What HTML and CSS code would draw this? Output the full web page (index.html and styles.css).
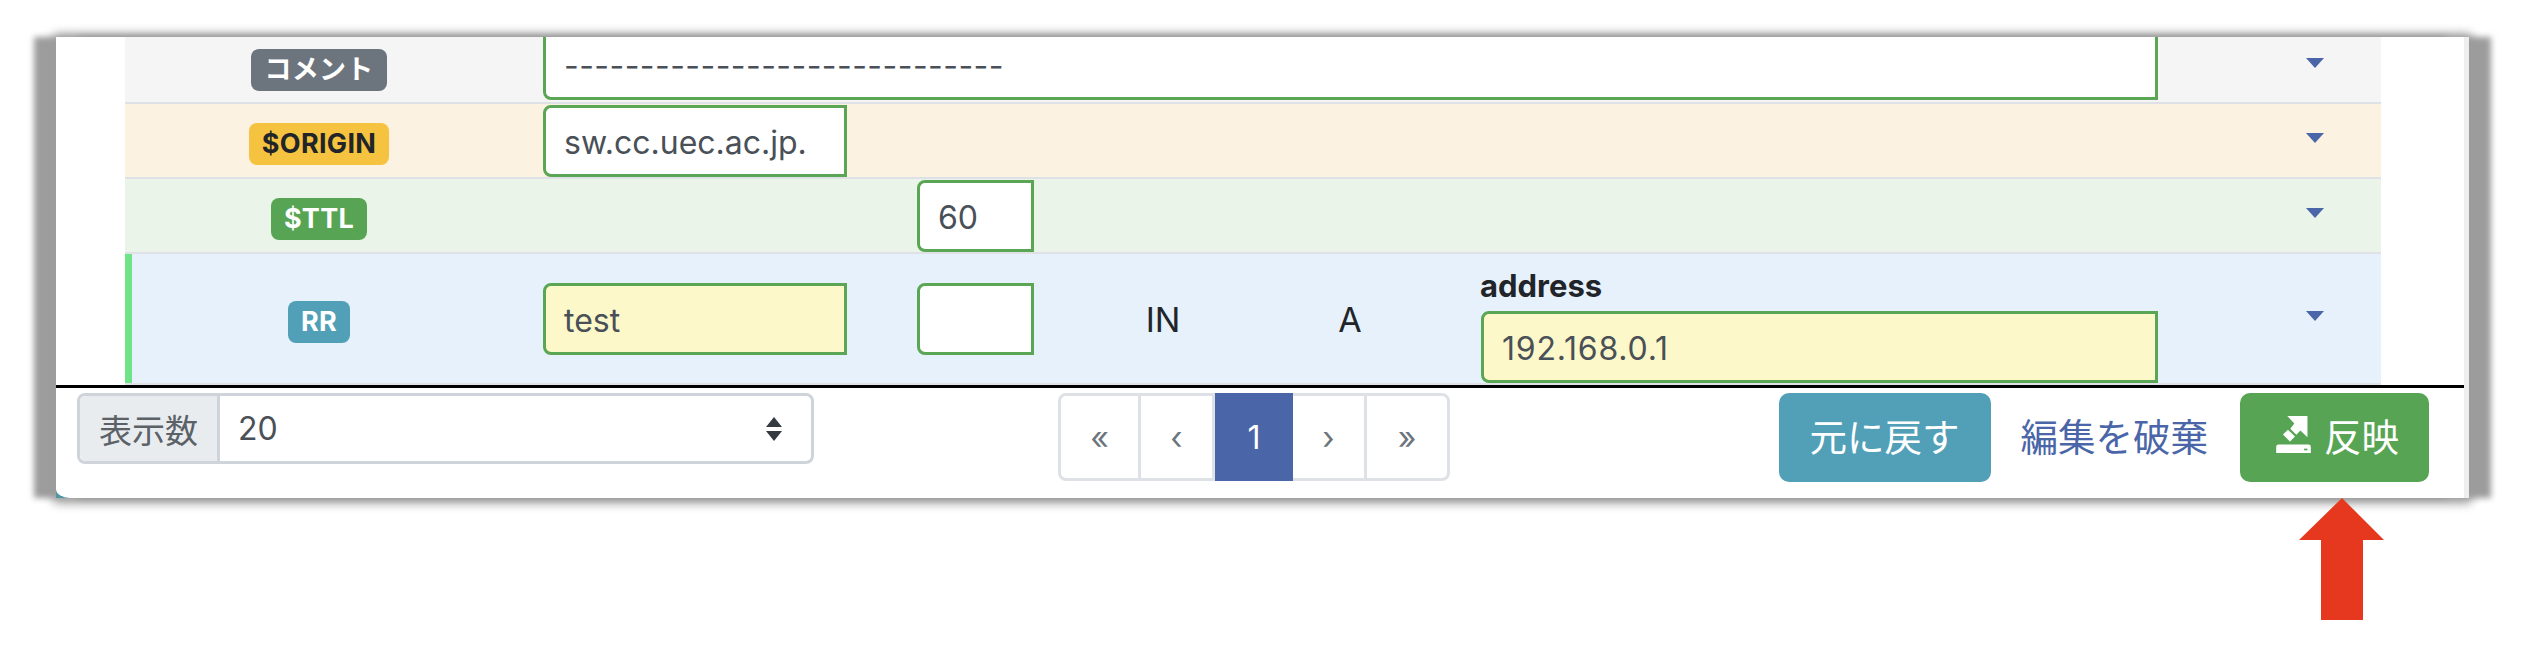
FILE: index.html
```html
<!DOCTYPE html>
<html lang="ja">
<head>
  <meta charset="UTF-8">
  <title>ゾーン編集</title>
  <link rel="stylesheet" href="styles.css">
</head>
<body>

<div class="shot">
  <div class="rows">
    <div class="row row-comment">
      <div class="cell-badge"><span class="badge badge-gray">コメント</span></div>
      <div class="field field-wide">-----------------------------</div>
      <span class="caret"></span>
    </div>
    <div class="row row-origin">
      <div class="cell-badge"><span class="badge badge-yellow">$ORIGIN</span></div>
      <div class="field">sw.cc.uec.ac.jp.</div>
      <span class="caret"></span>
    </div>
    <div class="row row-ttl">
      <div class="cell-badge"><span class="badge badge-green">$TTL</span></div>
      <div class="field field-ttl">60</div>
      <span class="caret"></span>
    </div>
    <div class="row row-rr">
      <div class="cell-badge"><span class="badge badge-teal">RR</span></div>
      <div class="field changed">test</div>
      <div class="field field-ttl"></div>
      <div class="cell-text">IN</div>
      <div class="cell-text">A</div>
      <div class="cell-data">
        <div class="data-label">address</div>
        <div class="field changed">192.168.0.1</div>
      </div>
      <span class="caret"></span>
    </div>
  </div>

  <div class="footer">
    <div class="per-page">
      <span class="per-page-label">表示数</span>
      <span class="per-page-value">20</span>
      <svg class="updown" viewBox="0 0 18 24" width="18" height="24">
        <path d="M9 0 L17 10 H1 Z M1 14 H17 L9 24 Z" fill="#343a40"/>
      </svg>
    </div>
    <div class="pager">
      <a class="page page-end">«</a>
      <a class="page">‹</a>
      <a class="page active">1</a>
      <a class="page">›</a>
      <a class="page page-end">»</a>
    </div>
    <div class="actions">
      <a class="btn btn-teal">元に戻す</a>
      <a class="btn-link">編集を破棄</a>
      <a class="btn btn-green">
        <svg class="btn-icon" viewBox="25 15 103 110" width="35" height="37">
          <path fill="#fff" d="M32 100 H121 Q128 100 128 107 V125 H25 V107 Q25 100 32 100 Z"/>
          <rect x="108" y="112" width="10" height="5" fill="#57a554"/>
          <path fill="#fff" d="M58 15 H118 V78 L97 58 L85 71 L67 53 L79 37 Z"/>
          <path fill="#fff" d="M45 70 L60 56 L81 76 L66 91 Z"/>
        </svg>
        反映
      </a>
    </div>
  </div>
</div>

<svg class="arrow" viewBox="0 0 85 122" width="85" height="122">
  <path d="M43 0 L85 42 H64 V122 H22 V42 H0 Z" fill="#e5381f"/>
</svg>

</body>
</html>
```

FILE: styles.css
```css
html, body { height: 100%; }

body {
  box-sizing: border-box;
  margin: 0;
  padding: 37px 0 0 56px;
  background: #fff;
  font-family: Inter, "Noto Sans CJK JP", sans-serif;
  font-size: 32px;
  color: #212529;
}

.shot {
  width: 2408px;
  height: 461px;
  background: #4f97a3;
  border-right: 5px solid #eee;
  box-shadow: -22px 0 6px 0 #9c9c9c, 22px 0 6px 0 #9c9c9c, 0 3px 10px 2px #adadad, 0 -1px 10px 2px #adadad;
}

.rows {
  padding: 0 83px 0 69px;
  background: #fff;
}

.row {
  display: grid;
  grid-template-columns: 418px 374px 117px 258px 116px 750px 1fr;
  align-items: center;
  height: 75px;
  box-sizing: border-box;
  border-bottom: 2px solid #dee2e6;
  overflow: hidden;
}
.row-comment {
  height: 67px;
  grid-template-rows: 65px;
  background: #f5f5f5;
}
.row-origin { background: #fcf2e1; }
.row-ttl { background: #eaf4e9; }
.row-rr {
  height: 131px;
  background: #e6f1fb;
  box-shadow: inset 7px 0 0 #6fe388;
}

.cell-badge {
  padding-right: 30px;
  text-align: center;
}
.badge {
  display: inline-block;
  margin-top: 7px;
  padding: 0 13px;
  height: 42px;
  line-height: 42px;
  border-radius: 8px;
  font-size: 27px;
  font-weight: 700;
  letter-spacing: .3px;
  color: #fff;
  vertical-align: middle;
}
.row-comment .badge { margin-top: 0; }
.badge-gray { background: #6c757d; }
.badge-yellow { background: #f5c33f; color: #212529; }
.badge-green { background: #57a554; }
.badge-teal { background: #52a0b8; }

.field {
  box-sizing: border-box;
  height: 72px;
  width: 304px;
  padding: 2px 18px 0;
  line-height: 66px;
  border: 3px solid #5aa655;
  border-radius: 8px 0 0 8px;
  background: #fff;
  color: #495057;
}
.field-wide {
  grid-column: 2 / 7;
  align-self: end;
  width: 1615px;
  margin-bottom: 2px;
  letter-spacing: .45px;
}
.field-ttl {
  grid-column: 3;
  width: 117px;
}
.changed { background: #fdf8c9; }

.cell-text {
  padding-top: 2px;
  font-size: 34px;
  text-align: center;
}
.cell-data {
  align-self: end;
  padding-left: 73px;
}
.cell-data .field {
  width: 677px;
  letter-spacing: .8px;
}
.data-label {
  margin: 0 0 7px -1px;
  font-size: 31px;
  font-weight: 700;
  line-height: 36px;
}

.caret {
  grid-column: 7;
  width: 0;
  height: 0;
  margin: 0 0 6px 148px;
  border-left: 9px solid transparent;
  border-right: 9px solid transparent;
  border-top: 10px solid #4a66a8;
}
.row-comment .caret { margin-bottom: 14px; }

.footer {
  display: flex;
  align-items: flex-start;
  height: 113px;
  box-sizing: border-box;
  padding: 5px 35px 0 21px;
  border-top: 3px solid #000;
  border-bottom-left-radius: 14px 9px;
  background: #fff;
}

.per-page {
  display: flex;
  align-items: center;
  box-sizing: border-box;
  width: 737px;
  height: 71px;
  border: 3px solid #ced4da;
  border-radius: 8px;
  color: #495057;
}
.per-page-label {
  display: flex;
  align-items: center;
  box-sizing: border-box;
  width: 140px;
  height: 100%;
  padding-left: 19px;
  background: #e9ecef;
  border-right: 3px solid #ced4da;
  border-radius: 6px 0 0 6px;
  font-size: 33px;
  color: #5a6268;
}
.per-page-value { margin-left: 18px; flex: 1; }
.updown { margin-right: 28px; }

.pager {
  display: flex;
  margin-left: 244px;
  height: 88px;
  box-sizing: border-box;
  border: 3px solid #dee2e6;
  border-radius: 8px;
}
.page {
  display: flex;
  align-items: center;
  justify-content: center;
  box-sizing: border-box;
  width: 74px;
  color: #6c757d;
  border-right: 3px solid #dee2e6;
}
.page-end { width: 80px; }
.page:last-child { border-right: 0; }
.page.active {
  width: 78px;
  margin: -3px 0;
  background: #4a66a8;
  color: #fff;
  border-right: 0;
}

.actions {
  display: flex;
  align-items: center;
  margin-left: auto;
  font-size: 37.5px;
}
.btn {
  display: flex;
  align-items: center;
  justify-content: center;
  box-sizing: border-box;
  height: 89px;
  padding-bottom: 6px;
  border-radius: 10px;
  color: #fff;
}
.btn-teal { width: 212px; background: #52a0b8; }
.btn-green {
  width: 189px;
  padding-left: 6px;
  background: #57a554;
}
.btn-icon { margin-right: 13px; }
.btn-link { margin: 0 32px 6px 30px; color: #4a66a8; }

.arrow {
  position: absolute;
  left: 2299px;
  top: 498px;
}
```
